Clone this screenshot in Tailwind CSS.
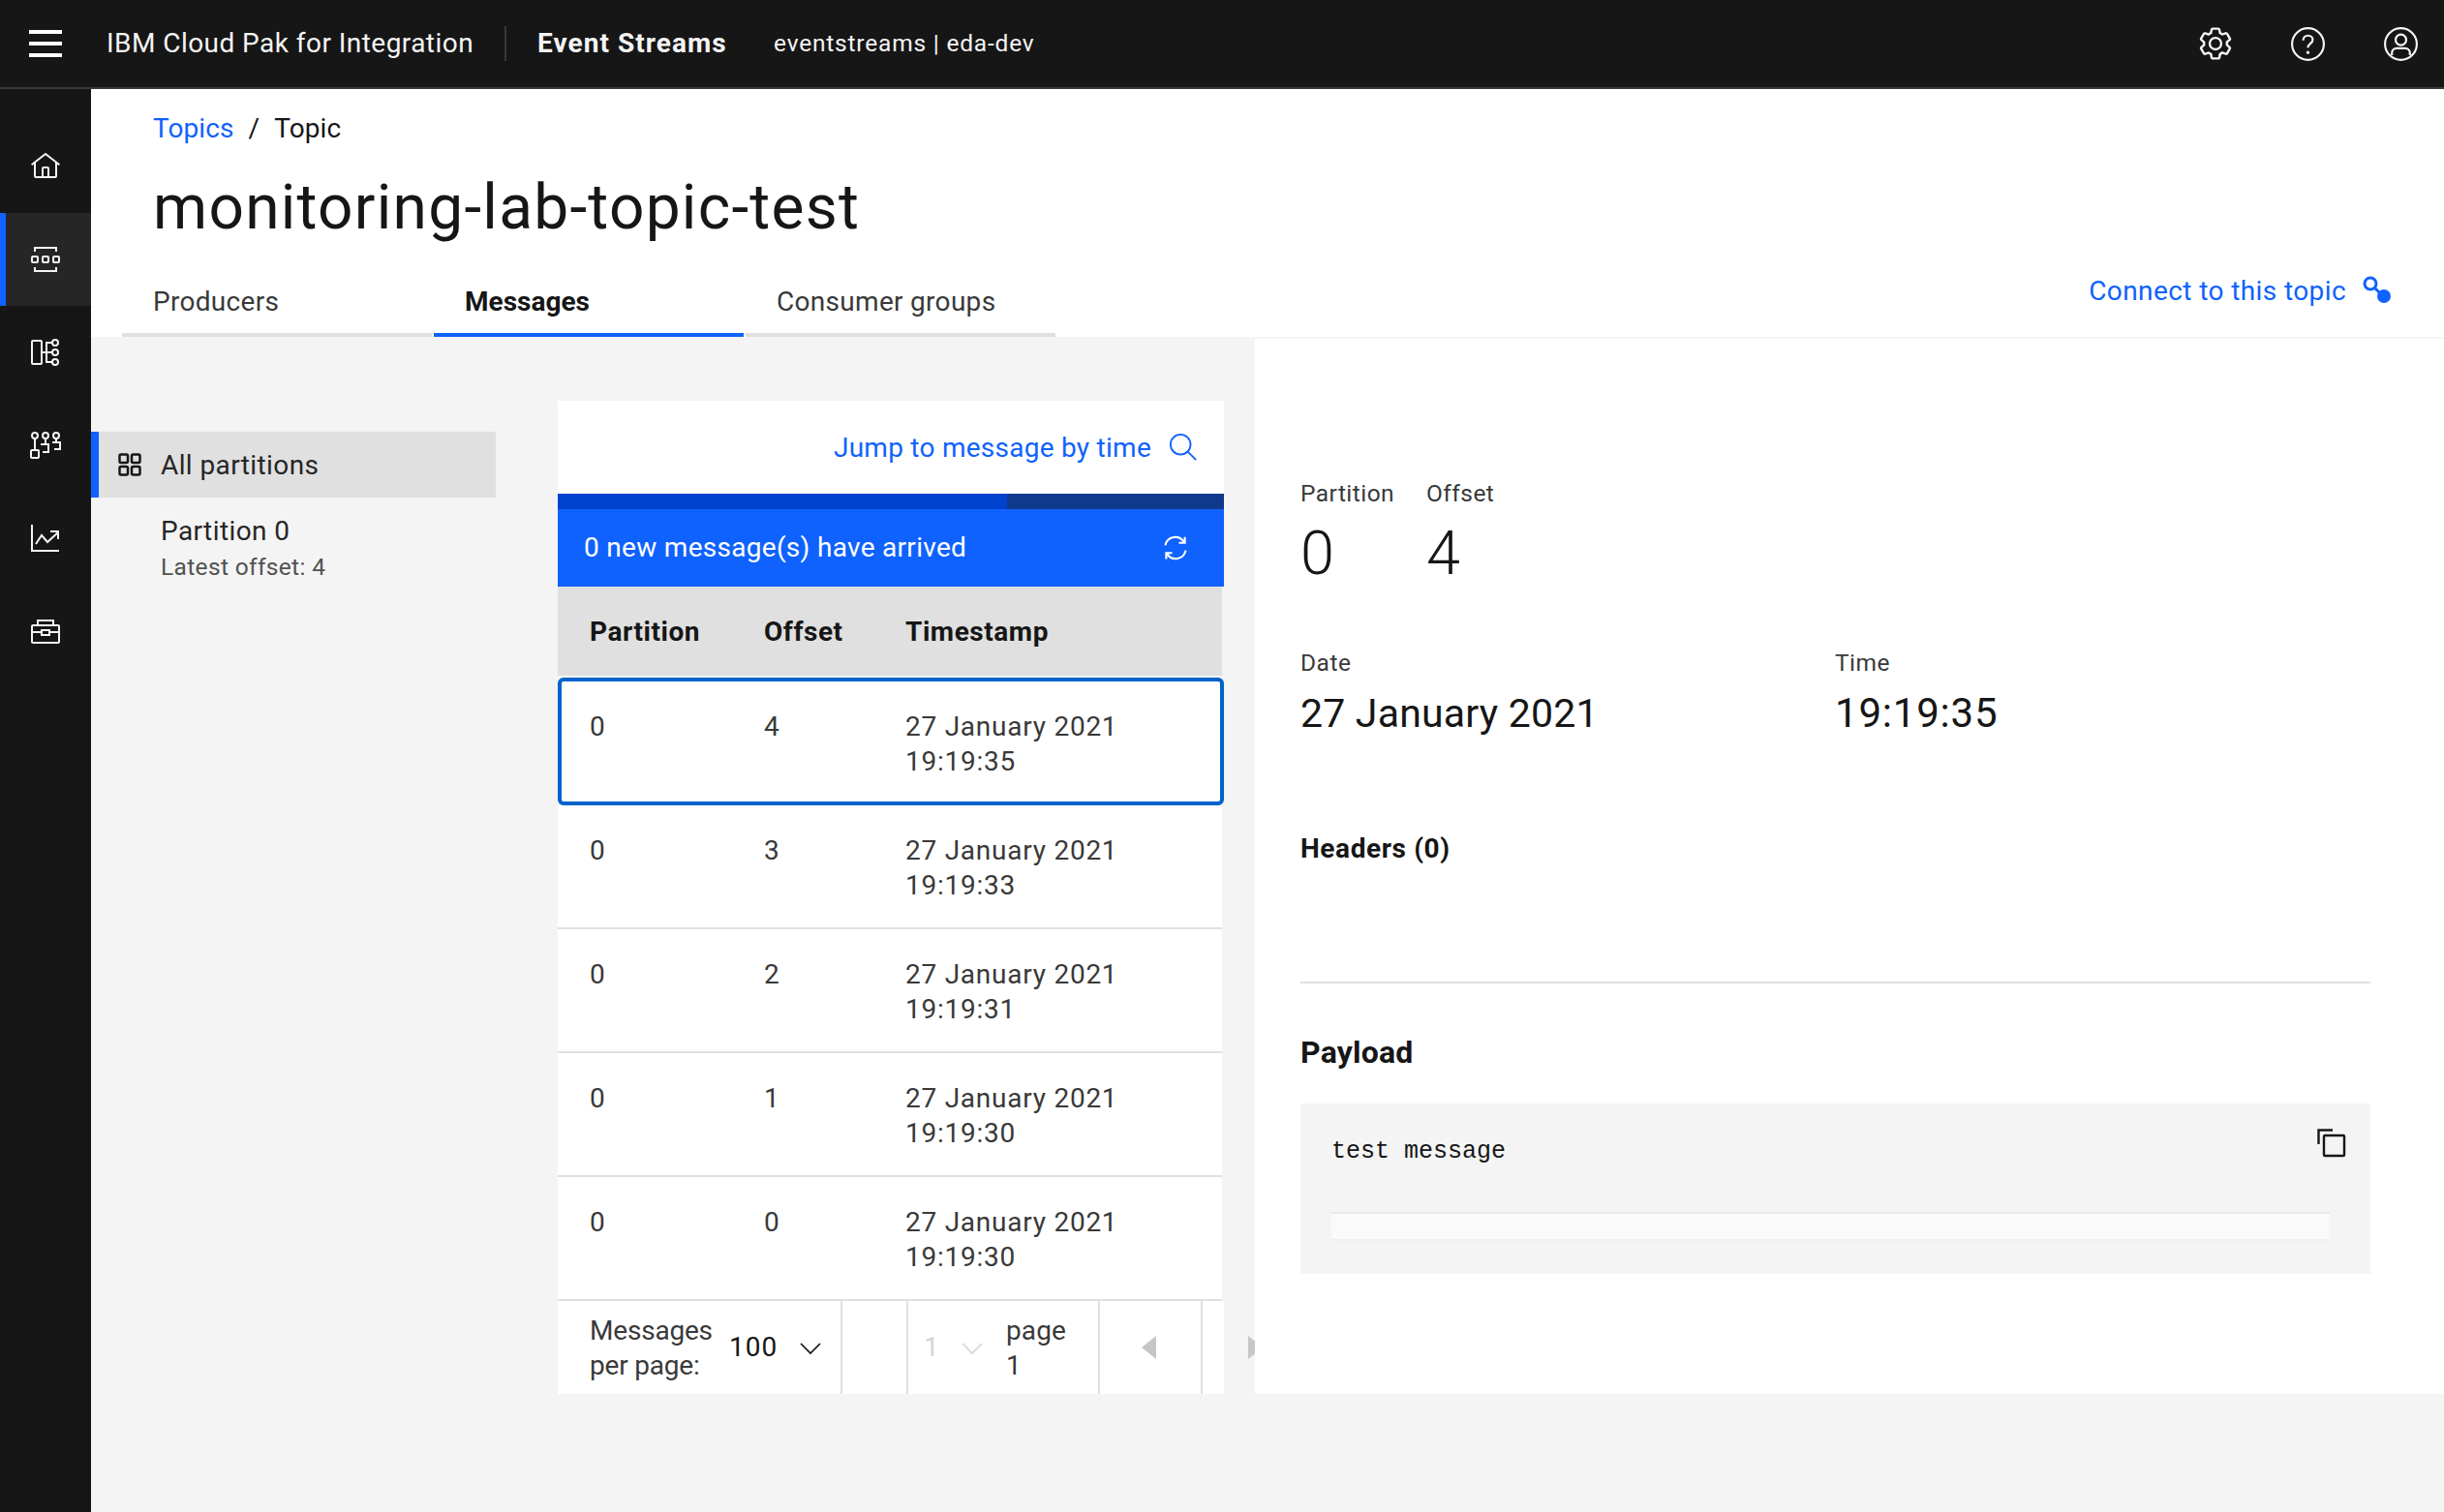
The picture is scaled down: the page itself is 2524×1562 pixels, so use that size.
<!DOCTYPE html>
<html><head><meta charset="utf-8"><script src="https://cdn.jsdelivr.net/npm/@tailwindcss/browser@4"></script></head>
<body class="font-['Roboto',sans-serif] bg-[#f4f4f4] text-[#161616] overflow-hidden">
<div class="w-[2524px] h-[1562px] flex flex-col">
<header class="h-[92px] shrink-0 bg-[#161616] border-b-2 border-[#393939] flex items-center text-[#f4f4f4]">
  <div class="w-[110px] pl-[30px] flex flex-col gap-[8px]"><span class="w-[34px] h-[4px] bg-white"></span><span class="w-[34px] h-[4px] bg-white"></span><span class="w-[34px] h-[4px] bg-white"></span></div>
  <span class="text-[28px] tracking-[0.45px] w-[413px] border-r-2 border-[#393939] h-[36px] leading-[36px]">IBM Cloud Pak for Integration</span>
  <span class="text-[28px] font-bold ml-[32px] tracking-[1.05px] w-[244px]">Event Streams</span>
  <span class="text-[24.5px] tracking-[0.8px]">eventstreams | eda-dev</span>
  <div class="ml-auto flex gap-[61px] pr-[27px] items-center">
    <svg class="w-[38px] h-[38px] -m-[1.5px]" viewBox="0 0 32 32" fill="#f4f4f4"><path d="M27 16.76c0-.25 0-.5 0-.76s0-.51 0-.77l1.92-1.68A2 2 0 0 0 29.3 11L26.94 7a2 2 0 0 0-1.73-1 2 2 0 0 0-.64.1l-2.43.82a11.35 11.35 0 0 0-1.31-.75l-.51-2.52a2 2 0 0 0-2-1.61H13.64a2 2 0 0 0-2 1.61l-.51 2.52a11.48 11.48 0 0 0-1.32.75L7.43 6.06A2 2 0 0 0 6.79 6 2 2 0 0 0 5.06 7L2.7 11a2 2 0 0 0 .41 2.51L5 15.24c0 .25 0 .5 0 .76s0 .51 0 .77L3.11 18.45A2 2 0 0 0 2.7 21L5.06 25a2 2 0 0 0 1.73 1 2 2 0 0 0 .64-.1l2.43-.82a11.35 11.35 0 0 0 1.31.75l.51 2.52a2 2 0 0 0 2 1.61h4.72a2 2 0 0 0 2-1.61l.51-2.52a11.48 11.48 0 0 0 1.32-.75l2.42.82a2 2 0 0 0 .64.1 2 2 0 0 0 1.73-1L29.3 21a2 2 0 0 0-.41-2.51ZM25.21 24l-3.43-1.16a8.86 8.86 0 0 1-2.71 1.57L18.36 28H13.64l-.71-3.55a9.36 9.36 0 0 1-2.7-1.57L6.79 24 4.43 20l2.72-2.4a8.9 8.9 0 0 1 0-3.13L4.43 12 6.79 8l3.43 1.16a8.86 8.86 0 0 1 2.71-1.57L13.64 4h4.72l.71 3.55a9.36 9.36 0 0 1 2.7 1.57L25.21 8 27.57 12l-2.72 2.4a8.9 8.9 0 0 1 0 3.13L27.57 20Z"/><path d="M16 22a6 6 0 1 1 6-6A5.94 5.94 0 0 1 16 22Zm0-10a3.91 3.91 0 0 0-4 4 3.91 3.91 0 0 0 4 4 3.91 3.91 0 0 0 4-4A3.91 3.91 0 0 0 16 12Z"/></svg>
    <svg class="w-[35px] h-[35px]" viewBox="0 0 32 32" fill="none" stroke="#f4f4f4" stroke-width="2"><circle cx="16" cy="16" r="15"/><path d="M11.5 12.5c0-2.6 2-4.5 4.6-4.5s4.4 1.8 4.4 4.1c0 3.4-4.5 3.4-4.5 7.4"/><circle cx="16" cy="24" r="1.5" fill="#f4f4f4" stroke="none"/></svg>
    <svg class="w-[35px] h-[35px]" viewBox="0 0 32 32" fill="none" stroke="#f4f4f4" stroke-width="2"><circle cx="16" cy="16" r="15"/><circle cx="16" cy="12" r="5"/><path d="M7.5 26.5v-2A4.5 4.5 0 0 1 12 20h8a4.5 4.5 0 0 1 4.5 4.5v2"/></svg>
  </div>
</header>
<div class="flex flex-1 min-h-0">
  <aside class="w-[94px] shrink-0 bg-[#161616] pt-[32px] flex flex-col">
    <div class="h-[96px] flex items-center justify-center"><svg class="w-[32px] h-[32px] -ml-[1px]" viewBox="0 0 32 32" fill="#f4f4f4"><path d="M16.612 2.214a1.01 1.01 0 0 0-1.242 0L1 13.419l1.243 1.572L4 13.621V26a2.004 2.004 0 0 0 2 2h20a2.004 2.004 0 0 0 2-2V13.63L29.757 15 31 13.428zM18 26h-4v-8h4zm2 0v-8a2.002 2.002 0 0 0-2-2h-4a2.002 2.002 0 0 0-2 2v8H6V12.062l10-7.79 10 7.8V26z"/></svg></div>
    <div class="h-[96px] flex items-center justify-center bg-[#262626] border-l-[6px] border-[#0f62fe] pr-[7px]"><svg class="w-[32px] h-[32px]" viewBox="0 0 32 32" fill="none" stroke="#f4f4f4" stroke-width="2"><path d="M5 8V4h22v4M5 24v4h22v-4"/><rect x="2" y="13" width="6" height="6" rx="1"/><rect x="13" y="13" width="6" height="6" rx="1"/><rect x="24" y="13" width="6" height="6" rx="1"/></svg></div>
    <div class="h-[96px] flex items-center justify-center"><svg class="w-[32px] h-[32px] -ml-[1px]" viewBox="0 0 32 32" fill="none" stroke="#f4f4f4" stroke-width="2"><rect x="2" y="4" width="10" height="24" rx="1"/><circle cx="26" cy="6" r="3"/><circle cx="26" cy="16" r="3"/><circle cx="26" cy="26" r="3"/><path d="M12 16h11M23 6h-6v20h6"/></svg></div>
    <div class="h-[96px] flex items-center justify-center"><svg class="w-[32px] h-[32px] -ml-[1px]" viewBox="0 0 32 32" fill="none" stroke="#f4f4f4" stroke-width="2"><circle cx="5" cy="6" r="3"/><circle cx="16" cy="6" r="3"/><circle cx="27" cy="6" r="3"/><path d="M5 9v12M16 9v5M11 15h8v8h-6M27 9v4M23 13h8v7h-6"/><rect x="1" y="21" width="8" height="8" rx="1"/></svg></div>
    <div class="h-[96px] flex items-center justify-center"><svg class="w-[32px] h-[32px] -ml-[1px]" viewBox="0 0 32 32" fill="none" stroke="#f4f4f4" stroke-width="2"><path d="M2 2v27h28M6 22l6-9 6 7 11-10M21 9h8v8"/></svg></div>
    <div class="h-[96px] flex items-center justify-center"><svg class="w-[32px] h-[32px] -ml-[1px]" viewBox="0 0 32 32" fill="none" stroke="#f4f4f4" stroke-width="2"><rect x="2" y="10" width="28" height="18" rx="1"/><path d="M8 10V5h16v5M2 17h10M20 17h10"/><rect x="12" y="15" width="8" height="5"/></svg></div>
  </aside>
  <main class="flex-1 min-w-0 flex flex-col">
    <section class="h-[258px] shrink-0 bg-white border-b-2 border-[#f4f4f4] flex flex-col pl-[64px]">
      <div class="mt-[23px] h-[36px] flex items-center text-[28px] tracking-[0.1px]"><span class="text-[#0f62fe]">Topics</span><span class="mx-[15px]">/</span><span>Topic</span></div>
      <h1 class="mt-[24px] text-[64px] leading-[80px] tracking-[1.25px] font-normal">monitoring-lab-topic-test</h1>
      <div class="flex items-end mt-auto -ml-[32px] pr-[53px]">
        <div class="w-[320px] h-[62px] mr-[2px] border-b-4 border-[#e0e0e0] pl-[32px] pb-[6px] text-[#393939] text-[28px] tracking-[0.3px] flex items-center">Producers</div>
        <div class="w-[320px] h-[62px] mr-[2px] border-b-4 border-[#0f62fe] pl-[32px] pb-[6px] font-bold text-[28px] flex items-center">Messages</div>
        <div class="w-[320px] h-[62px] border-b-4 border-[#e0e0e0] pl-[32px] pb-[6px] text-[#393939] text-[28px] tracking-[0.3px] flex items-center">Consumer groups</div>
        <div class="ml-auto self-start flex items-center gap-[16px] text-[#0f62fe] text-[28px] tracking-[0.4px] h-[30px]">Connect to this topic<svg class="w-[32px] h-[32px]" viewBox="0 0 32 32"><circle cx="9" cy="8" r="6" fill="none" stroke="#0f62fe" stroke-width="3"/><path d="M13 12l8 8" stroke="#0f62fe" stroke-width="3"/><circle cx="23" cy="21" r="7" fill="#0f62fe"/></svg></div>
      </div>
    </section>
    <div class="flex">
      <div class="w-[1202px] shrink-0 h-[1090px] flex">
        <div class="w-[418px] shrink-0 pt-[96px]">
          <div class="h-[68px] bg-[#e0e0e0] border-l-[8px] border-[#0f62fe] flex items-center text-[28px] tracking-[0.4px] text-[#262626]"><svg class="w-[24px] h-[24px] ml-[20px] mr-[20px]" viewBox="0 0 24 24" fill="none" stroke="#161616" stroke-width="2.5"><rect x="1.5" y="1.5" width="8.5" height="8.5" rx="1.5"/><rect x="14" y="1.5" width="8.5" height="8.5" rx="1.5"/><rect x="1.5" y="14" width="8.5" height="8.5" rx="1.5"/><rect x="14" y="14" width="8.5" height="8.5" rx="1.5"/></svg><span class="mt-[1px]">All partitions</span></div>
          <div class="pl-[72px] pt-[17px]"><div class="text-[28px] leading-[36px] tracking-[0.4px] text-[#262626]">Partition 0</div><div class="text-[24.5px] leading-[36px] tracking-[0.35px] text-[#525252] mt-[1px]">Latest offset: 4</div></div>
        </div>
        <div class="w-[688px] ml-[64px] mt-[64px] h-[1026px] relative">
          <div class="h-[96px] bg-white flex items-center justify-end pr-[27px] gap-[18px] text-[#0f62fe] text-[28px] tracking-[0.26px]"><span class="mt-[1px]">Jump to message by time</span><svg class="w-[30px] h-[30px]" viewBox="0 0 32 32" fill="none" stroke="#0f62fe" stroke-width="2"><circle cx="13" cy="13" r="11"/><path d="M21 21l9 9"/></svg></div>
          <div class="h-[16px] flex"><div class="w-[464px] bg-[#0043ce]"></div><div class="flex-1 bg-[#0f3a8c]"></div></div>
          <div class="h-[80px] bg-[#0f62fe] flex items-center justify-between pl-[27px] pr-[36px] text-white text-[28px] tracking-[0.3px]"><span>0 new message(s) have arrived</span><svg class="w-[28px] h-[28px]" viewBox="0 0 32 32" fill="none" stroke="#fff" stroke-width="2.4"><path d="M4 13a12 12 0 0 1 22-4M28 19a12 12 0 0 1-22 4M27 3v7h-7M5 29v-7h7"/></svg></div>
          <div class="h-[92px] w-[686px] bg-[#e0e0e0] grid grid-cols-[180px_146px_1fr] pl-[33px] pt-[1px] items-center font-bold text-[28px] tracking-[0.55px]"><span>Partition</span><span>Offset</span><span>Timestamp</span></div>
          <div class="mt-[2px] h-[132px] rounded-[6px] border-4 border-[#0062cb] bg-white grid grid-cols-[180px_146px_1fr] pl-[29px] pt-[29px] text-[28px] leading-[36px] tracking-[0.75px] text-[#393939]"><span>0</span><span>4</span><span>27 January 2021<br>19:19:35</span></div>
          <div class="h-[128px] w-[686px] bg-white border-b-2 border-[#e0e0e0] grid grid-cols-[180px_146px_1fr] pl-[33px] pt-[29px] text-[28px] leading-[36px] tracking-[0.75px] text-[#393939]"><span>0</span><span>3</span><span>27 January 2021<br>19:19:33</span></div>
          <div class="h-[128px] w-[686px] bg-white border-b-2 border-[#e0e0e0] grid grid-cols-[180px_146px_1fr] pl-[33px] pt-[29px] text-[28px] leading-[36px] tracking-[0.75px] text-[#393939]"><span>0</span><span>2</span><span>27 January 2021<br>19:19:31</span></div>
          <div class="h-[128px] w-[686px] bg-white border-b-2 border-[#e0e0e0] grid grid-cols-[180px_146px_1fr] pl-[33px] pt-[29px] text-[28px] leading-[36px] tracking-[0.75px] text-[#393939]"><span>0</span><span>1</span><span>27 January 2021<br>19:19:30</span></div>
          <div class="h-[128px] w-[686px] bg-white border-b-2 border-[#e0e0e0] grid grid-cols-[180px_146px_1fr] pl-[33px] pt-[29px] text-[28px] leading-[36px] tracking-[0.75px] text-[#393939]"><span>0</span><span>0</span><span>27 January 2021<br>19:19:30</span></div>
          <div class="h-[96px] bg-white flex text-[28px] leading-[36px] tracking-[0.1px] text-[#393939] relative">
            <div class="w-[294px] shrink-0 border-r-2 border-[#e0e0e0] pl-[33px] flex items-center"><span class="w-[144px] shrink-0 -tracking-[0.2px] mt-[1px]">Messages<br>per page:</span><span class="text-[#161616] tracking-[1px]">100</span><svg class="w-[24px] h-[24px] ml-[22px]" viewBox="0 0 24 24" fill="none" stroke="#161616" stroke-width="1.7"><path d="M2 8l10 10L22 8"/></svg></div>
            <div class="w-[68px] shrink-0 border-r-2 border-[#e0e0e0]"></div>
            <div class="w-[198px] shrink-0 border-r-2 border-[#e0e0e0] flex items-center pl-[16px]"><span class="text-[#d6d6d6] w-[38px] shrink-0">1</span><svg class="w-[24px] h-[24px]" viewBox="0 0 24 24" fill="none" stroke="#d6d6d6" stroke-width="1.7"><path d="M2 8l10 10L22 8"/></svg><span class="ml-[23px] mt-[1px]">page<br>1</span></div>
            <div class="w-[106px] shrink-0 border-r-2 border-[#e0e0e0] flex items-center justify-center pr-[2px]"><svg class="w-[16px] h-[24px]" viewBox="0 0 16 24" fill="#c6c6c6"><path d="M15 0v24L0 12z"/></svg></div>
            <svg class="absolute left-[712px] top-[36px] w-[16px] h-[24px]" viewBox="0 0 16 24" fill="#c6c6c6"><path d="M1 0v24l15-12z"/></svg>
          </div>
        </div>
      </div>
      <div class="flex-1 h-[1090px] bg-white pl-[47px] pr-[76px] relative z-10">
        <div class="flex pt-[142px] gap-[32px] text-[24.5px] leading-[36px] tracking-[0.45px] text-[#393939]">
          <div><div>Partition</div><div class="text-[63px] leading-[76px] text-[#161616] font-light mt-[6px]">0</div></div>
          <div class="ml-[1px]"><div>Offset</div><div class="text-[63px] leading-[76px] text-[#161616] font-light mt-[6px]">4</div></div>
        </div>
        <div class="flex mt-[57px] text-[24.5px] leading-[36px] tracking-[0.5px] text-[#393939]">
          <div class="w-[552px]"><div>Date</div><div class="text-[41px] leading-[52px] text-[#161616] tracking-[0.2px] mt-[8px]">27 January 2021</div></div>
          <div><div>Time</div><div class="text-[42px] leading-[52px] text-[#161616] tracking-[0.8px] mt-[8px]">19:19:35</div></div>
        </div>
        <div class="mt-[96px] text-[28px] leading-[36px] font-bold tracking-[0.6px]">Headers (0)</div>
        <div class="mt-[119px] h-[2px] bg-[#e0e0e0]"></div>
        <div class="mt-[53px] text-[32px] leading-[36px] font-bold tracking-[0.2px]">Payload</div>
        <div class="mt-[35px] h-[176px] bg-[#f4f4f4] relative px-[32px] pt-[34px] font-['Liberation_Mono',monospace] text-[25px] leading-[32px] text-[#161616]">test message
          <svg class="absolute right-[25px] top-[26px] w-[30px] h-[30px]" viewBox="0 0 30 30" fill="none" stroke="#161616" stroke-width="2.4"><path d="M1.5 16V1.5H16"/><rect x="7" y="7" width="21" height="21" rx="1"/></svg>
          <div class="absolute left-[32px] right-[42px] top-[112px] h-[30px] bg-[#fafafa] border-t-2 border-b-2 border-t-[#e8e8e8] border-b-[#f0f0f0]"></div>
        </div>
      </div>
    </div>
  </main>
</div>
</div>
</body></html>
